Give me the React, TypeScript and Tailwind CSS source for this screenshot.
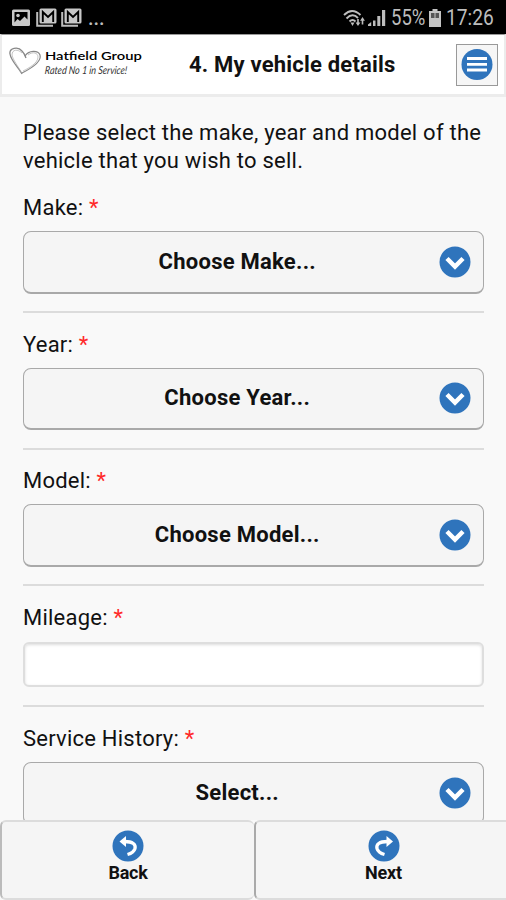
import React from 'react';

const StatusBar: React.FC = () => (
  <div className="flex h-[34px] shrink-0 items-center justify-between bg-black pl-3 pr-[13px] pt-px text-[#bdbdbd]">
    <div className="flex items-center">
      <svg className="h-[18px] w-[18px]" viewBox="0 0 18 18">
        <rect x="0" y="0.500" width="18" height="16.500" rx="1.500" fill="#c8c8c8" />
        <path d="M2.500 3h13v7.500l-3-3-4.500 4.500-2.500-2-3 3.500z" fill="#000" />
        <circle cx="6" cy="6.500" r="1.800" fill="#c8c8c8" />
      </svg>
      <MailIcon className="ml-[6px] h-[19px] w-[21px]" />
      <MailIcon className="ml-1 h-[19px] w-[21px]" />
      <span className="ml-[6px] text-xl leading-none font-medium">...</span>
    </div>
    <div className="flex items-center">
      <svg className="h-[18px] w-[23px]" viewBox="0 0 23 18" fill="none">
        <path d="M1 6Q9 -2 17.500 6M3.500 9.500Q9.500 3.500 15 9M6.500 12.500Q9.500 9.500 12.500 12.500" stroke="#bdbdbd" strokeWidth="1.900" />
        <path d="M7.500 13.500h4l-2 3.500z" fill="#bdbdbd" />
        <path d="M15 10v5M19.500 15.500V11" stroke="#bdbdbd" strokeWidth="1.600" />
        <path d="M12.600 13.500h4.800L15 17zM17.100 11.800h4.800l-2.400-3.800z" fill="#bdbdbd" />
      </svg>
      <svg className="ml-[2px] h-[18px] w-[18px]" viewBox="0 0 18 18">
        <path d="M0 17v-1.500l3.200-2.500v4z" fill="#bdbdbd" />
        <path d="M5 11.500h2.500V17H5zM9.300 7h3V17h-3zM14 1h3.200v16H14z" fill="#bdbdbd" />
      </svg>
      <span className="ml-[5px] w-[35px] text-[22px] leading-none whitespace-nowrap">
        <span className="inline-block origin-left scale-x-[0.840]">55%</span>
      </span>
      <svg className="ml-[3px] h-[18px] w-3" viewBox="0 0 12 18">
        <path d="M3.500 0h5v2H12v16H0V2h3.500z" fill="#c4c4c4" />
        <path d="M2 4h8v5H2z" fill="#555" />
        <path d="M6 3v6" stroke="#c4c4c4" strokeWidth="1" />
      </svg>
      <span className="ml-[5px] w-[47px] text-[22px] leading-none whitespace-nowrap">
        <span className="inline-block origin-left scale-x-[0.870]">17:26</span>
      </span>
    </div>
  </div>
);

const MailIcon: React.FC<{ className: string }> = ({ className }) => (
  <svg className={className} viewBox="0 0 21 19">
    <path d="M1.200 4v13.800H17" fill="none" stroke="#bdbdbd" strokeWidth="2" />
    <rect x="3.500" y="0.500" width="17" height="15" rx="1.500" fill="#c8c8c8" />
    <path d="M6.800 14V4l5.200 5 5.200-5V14" fill="none" stroke="#000" strokeWidth="1.900" />
  </svg>
);

const Logo: React.FC = () => (
  <div className="flex h-[37px] w-[136px] items-start">
    <svg className="h-[30px] w-[34px] shrink-0" viewBox="0 0 34 30" fill="none" stroke="#888">
      <path d="M13 28C10 22 2 15 1 8C0 2 9 0 13 5C15 7 16 9 17 12" strokeWidth="1.300" />
      <path d="M16 10C20 4 29 4 31 9C33 16 23 22 13 27" strokeWidth="1.200" />
      <path d="M12 26C9 20 4 14 3 9C3 3 9 3 13 7M19 9C24 5 29 7 29 11C29 17 20 22 14 25" strokeWidth="0.700" stroke="#aaa" />
    </svg>
    <div className="ml-[2px] w-[99px] pt-[2px] whitespace-nowrap text-black">
      <div className="w-max origin-left scale-x-[1.230] font-['Lato'] text-[12px] leading-[15px] font-semibold">Hatfield Group</div>
      <div className="w-max origin-left -skew-x-6 scale-x-[0.820] font-['Lato'] text-[11px] leading-[13px] font-normal text-[#333] italic">Rated No 1 in Service!</div>
    </div>
  </div>
);

const Header: React.FC = () => (
  <header className="flex h-[63px] shrink-0 items-center border-x-2 border-t border-b-[3px] border-x-[#ececec] border-t-[#999] border-b-[#ececec] bg-white pl-[7px] pr-[6px]">
    <Logo />
    <h1 className="ml-[44px] flex-1 whitespace-nowrap text-[22px] leading-none font-bold tracking-[0.2px]">4. My vehicle details</h1>
    <button className="flex h-[42px] w-[42px] items-center justify-center border-[1.5px] border-[#999] bg-[#f6f6f6]">
      <svg className="h-[32px] w-[32px] shrink-0" viewBox="0 0 32 32">
        <circle cx="16" cy="15.500" r="15.500" fill="#2f74bc" />
        <path d="M6 9.500h20M6 15.300h20M6 21h20" stroke="#fff" strokeWidth="2.800" />
      </svg>
    </button>
  </header>
);

const Label: React.FC<{ text: string }> = ({ text }) => (
  <div className="h-7 text-[22px] leading-[27px] tracking-[0.230px]">
    {text}: <span className="text-[#ff2a2a]">*</span>
  </div>
);

const SelectField: React.FC<{ label: string; value: string }> = ({ label, value }) => (
  <div className="mb-[17.500px]">
    <Label text={label} />
    <button className="mt-[9px] flex h-[62.500px] w-full items-center rounded-lg border border-b-2 border-[#a9a9a9] bg-[#f5f5f5] pr-[12.500px]">
      <span className="flex-1 pl-[12px] text-center text-[22px] leading-none font-bold tracking-[0.250px]">{value}</span>
      <svg className="h-[32px] w-[32px]" viewBox="0 0 32 32">
        <circle cx="16" cy="16" r="15.500" fill="#2f74bc" />
        <path d="M8 12.500l8 8 8-8" fill="none" stroke="#fff" strokeWidth="4.500" />
      </svg>
    </button>
  </div>
);

const Divider: React.FC = () => <hr className="mb-[17.500px] border-t-2 border-[#dcdcdc]" />;

const App: React.FC = () => {
  return (
    <div className="flex h-[900px] w-[506px] flex-col overflow-hidden bg-[#f9f9f9] font-['Roboto',sans-serif] text-[#111]">
      <StatusBar />
      <Header />
      <main className="min-h-0 flex-1 overflow-hidden pt-[22px] pr-[22px] pl-[23px]">
        <p className="mb-[19px] whitespace-nowrap text-[22px] leading-7 tracking-[0.230px]">
          Please select the make, year and model of the
          <br />
          vehicle that you wish to sell.
        </p>
        <SelectField label="Make" value="Choose Make..." />
        <Divider />
        <SelectField label="Year" value="Choose Year..." />
        <Divider />
        <SelectField label="Model" value="Choose Model..." />
        <Divider />
        <Label text="Mileage" />
        <input className="mt-[10px] mb-[18px] block h-[45px] w-full rounded-md border-2 border-[#dedede] bg-white shadow-[inset_0_1px_3px_#ddd]" />
        <Divider />
        <div className="pt-px">
          <SelectField label="Service History" value="Select..." />
        </div>
      </main>
      <footer className="flex h-[80px] shrink-0 bg-[#f9f9f9] text-[18px] leading-none font-bold">
        <button className="flex w-[254px] flex-col items-center rounded-md border-2 border-r-0 border-[#dcdcdc] border-l-[#bbb] bg-[#f5f5f5] pt-2">
          <svg className="h-[32px] w-[32px]" viewBox="0 0 32 32">
            <circle cx="16" cy="16" r="15.500" fill="#2f74bc" />
            <path d="M7.500 11.500L14 6v11z" fill="#fff" />
            <path d="M12.500 11.500C21 11.500 24 14.500 23 18.500C22 22 19 23.500 15.500 24.500" fill="none" stroke="#fff" strokeWidth="3.300" />
          </svg>
          <span className="mt-[2px] tracking-[-0.300px]">Back</span>
        </button>
        <button className="flex flex-1 flex-col items-center rounded-l-md border-2 border-r-0 border-[#dcdcdc] border-l-[#aaa] bg-[#f5f5f5] pt-2 pl-[5px]">
          <svg className="h-[32px] w-[32px]" viewBox="0 0 32 32">
            <circle cx="16" cy="16" r="15.500" fill="#2f74bc" />
            <path d="M25 11.500L18.500 6v11z" fill="#fff" />
            <path d="M19.500 11.500C11 11.500 8 14.500 9 18.500C10 22 13 23.500 16.500 24.500" fill="none" stroke="#fff" strokeWidth="3.300" />
          </svg>
          <span className="mt-[2px] tracking-[-0.200px]">Next</span>
        </button>
      </footer>
    </div>
  );
};

export default App;
